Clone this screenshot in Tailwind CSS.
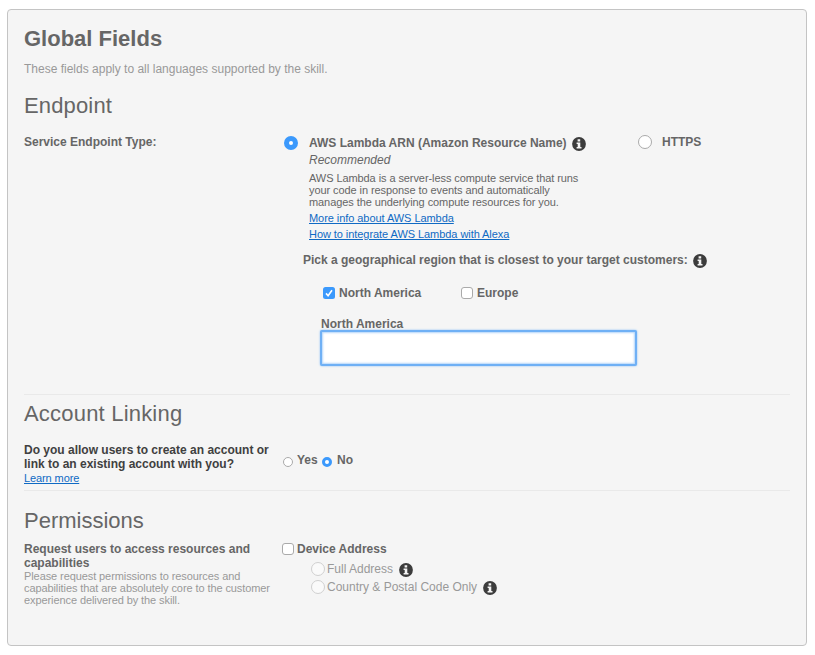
<!DOCTYPE html>
<html lang="en">
<head>
<meta charset="utf-8">
<title>Global Fields</title>
<script src="https://cdn.jsdelivr.net/npm/@tailwindcss/browser@4"></script>
</head>
<body class="bg-white font-['Liberation_Sans',Arial,sans-serif] text-[12px] leading-[14px] text-[#666]">
<svg class="hidden">
  <symbol id="info" viewBox="0 0 14 14">
    <circle cx="7" cy="7" r="6.900" fill="#3c3c3c"/>
    <path d="M5.600 2.200h2.600v2.200H5.600zM4.600 5.400h3.700v4.500h1.200v1.700H4.600V9.900h1.100V7.100H4.600z" fill="#f5f5f5"/>
  </symbol>
</svg>
<main class="ml-[7px] mt-[9px] h-[637px] w-[800px] rounded-[4px] border border-[#c4c4c4] bg-[#f5f5f5] pl-4 pr-4">
  <header>
    <h1 class="mt-[15px] text-[22px] font-bold leading-7"><span>Global Fields</span></h1>
    <p class="mt-2 leading-4 text-[#999]"><span>These fields apply to all languages supported by the skill.</span></p>
  </header>

  <section class="h-[318px] border-b border-[#e9e9e9] pt-[15px]">
    <h2 class="text-[22px] leading-7 tracking-[0.15px]"><span>Endpoint</span></h2>
    <div class="flex">
      <div class="w-[260px] shrink-0 pt-[15px] font-bold"><span>Service Endpoint Type:</span></div>
      <div class="pt-4">
        <div class="flex">
          <div class="flex w-[354px]">
            <span class="size-[14px] shrink-0 rounded-full border-[5px] border-[#3b99fc] bg-white"></span>
            <div class="ml-[11px]">
              <div class="flex font-bold"><span class="w-[263px] whitespace-nowrap"><span>AWS Lambda ARN (Amazon Resource Name)</span></span><svg class="mt-px size-[14px]"><use href="#info"/></svg></div>
              <p class="mt-[2px] italic"><span>Recommended</span></p>
              <p class="mt-[5px] whitespace-nowrap text-[11px] leading-3 tracking-[-0.080px]"><span>AWS Lambda is a server-less compute service that runs</span><br><span>your code in response to events and automatically</span><br><span>manages the underlying compute resources for you.</span></p>
              <div class="mt-[2px] text-[11px] leading-4 tracking-[-0.060px] text-[#0f6ac4]"><a class="underline">More info about AWS Lambda</a><br><a class="underline">How to integrate AWS Lambda with Alexa</a></div>
            </div>
          </div>
          <div class="-mt-px flex h-[14px] font-bold"><span class="mr-[10px] size-[14px] rounded-full border border-[#aaa] bg-white"></span><span>HTTPS</span></div>
        </div>
        <div class="ml-[19px] mt-[11px] flex font-bold"><span class="w-[390px] whitespace-nowrap"><span>Pick a geographical region that is closest to your target customers:</span></span><svg class="mt-px size-[14px]"><use href="#info"/></svg></div>
        <div class="ml-[39px] mt-[18px] flex font-bold">
          <div class="flex w-[138px]"><svg class="mr-1 mt-px size-3" viewBox="0 0 12 12"><rect width="12" height="12" rx="2.500" fill="#3b99fc"/><path d="M3 6.400l2.100 2.300L9 3.300" fill="none" stroke="#fff" stroke-width="1.600"/></svg><span>North America</span></div>
          <div class="flex"><span class="mr-1 mt-px size-3 rounded-[3px] border border-[#aaa] bg-white"></span><span>Europe</span></div>
        </div>
        <label class="ml-[37px] mt-[17px] block font-bold"><span>North America</span></label>
        <div class="-mt-px ml-[36px] h-[36px] w-[317px] rounded-[2px] border-2 border-[#6fb0f5] bg-white shadow-[0_0_2px_0px_#7db8f7,inset_0_0_2px_1px_#b4d6fa]"></div>
      </div>
    </div>
  </section>

  <section class="h-[96px] border-b border-[#e9e9e9] pt-[5px]">
    <h2 class="text-[22px] leading-7 tracking-[0.200px]"><span>Account Linking</span></h2>
    <div class="mt-[15px] flex">
      <div class="w-[259px] shrink-0">
        <p class="whitespace-nowrap font-bold text-[#404040]"><span>Do you allow users to create an account or</span><br><span>link to an existing account with you?</span></p>
        <a class="mt-px block text-[11px] leading-3 tracking-[-0.100px] text-[#0f6ac4] underline"><span>Learn more</span></a>
      </div>
      <div class="flex pt-[10px] font-bold">
        <span class="mr-1 mt-1 size-[10px] rounded-full border border-[#aaa] bg-white"></span><span class="w-[25px]">Yes</span>
        <span class="mr-[5px] mt-1 size-[10px] rounded-full border-[3px] border-[#3b99fc] bg-white"></span><span>No</span>
      </div>
    </div>
  </section>

  <section class="pt-4">
    <h2 class="text-[22px] leading-7"><span>Permissions</span></h2>
    <div class="mt-[7px] flex">
      <div class="w-[258px] shrink-0 whitespace-nowrap">
        <p class="font-bold"><span>Request users to access resources and</span><br><span>capabilities</span></p>
        <p class="text-[11px] leading-3 tracking-[-0.090px] text-[#999]"><span>Please request permissions to resources and</span><br><span>capabilities that are absolutely core to the customer</span><br><span>experience delivered by the skill.</span></p>
      </div>
      <div>
        <div class="flex font-bold"><span class="mr-[3px] mt-px size-3 rounded-[3px] border border-[#aaa] bg-white"></span><span>Device Address</span></div>
        <div class="ml-[29px] mt-[6px] flex h-[14px] text-[#999]"><span class="mr-[2px] size-[14px] rounded-full border border-[#d0d0d0] bg-[#fafafa]"></span><span class="w-[72px]"><span>Full Address</span></span><svg class="mt-px size-[14px]"><use href="#info"/></svg></div>
        <div class="ml-[29px] mt-1 flex h-[14px] text-[#999]"><span class="mr-[2px] size-[14px] rounded-full border border-[#d0d0d0] bg-[#fafafa]"></span><span class="w-[156px] whitespace-nowrap"><span>Country &amp; Postal Code Only</span></span><svg class="mt-px size-[14px]"><use href="#info"/></svg></div>
      </div>
    </div>
  </section>
</main>
</body>
</html>
